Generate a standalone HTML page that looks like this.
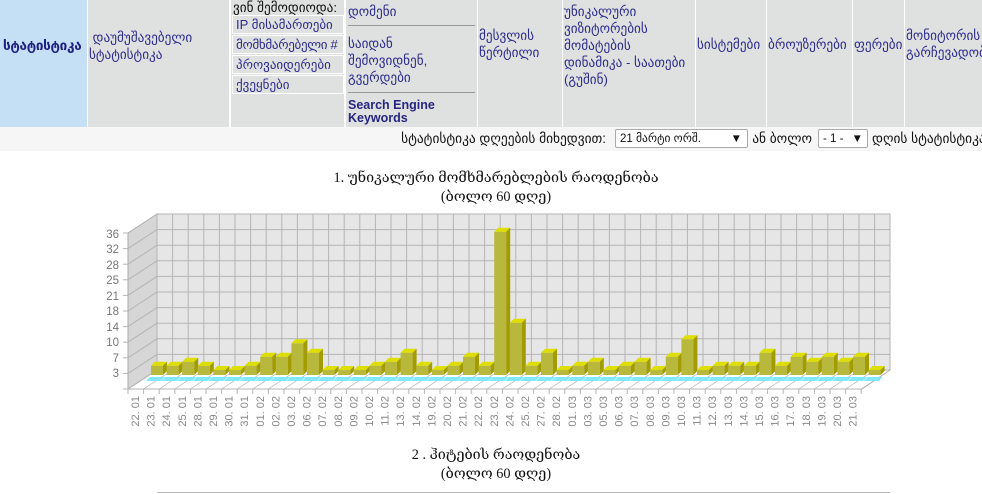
<!DOCTYPE html>
<html><head><meta charset="utf-8">
<style>
body{margin:0;width:982px;height:494px;overflow:hidden;background:#fff;font-family:"Liberation Sans","DejaVu Sans",sans-serif;position:relative}
.c{position:absolute;top:0;height:127px;background:#dfe0e0;color:#2c2c8c;font-size:13.2px;line-height:17px}
.sb{position:absolute;left:232px;width:107px;height:17px;background:#dfe0e0;border:1px solid #fff;color:#2c2c8c;font-size:13px;line-height:17px;padding-left:3px;box-sizing:content-box;white-space:nowrap;overflow:hidden}
.row2{position:absolute;top:127px;left:0;width:982px;height:24px;background:#f6f6f6;font-size:13.4px;color:#111}
.sel{position:absolute;top:2px;height:19px;border:1px solid #aaa;background:#fff;font-size:11.5px;line-height:18px;padding-left:4px;box-sizing:border-box;border-radius:2px}
.t{position:absolute;width:982px;left:5px;text-align:center;font-family:"Liberation Serif","DejaVu Serif",serif;font-size:14.3px;color:#111}
</style></head><body>
<div class="c" style="left:0;width:87px;background:#c5e0f5;font-weight:bold;line-height:92px;padding-left:3px;box-sizing:border-box;color:#1f1f80;font-size:13.5px;letter-spacing:-0.3px;white-space:nowrap;overflow:hidden">სტატისტიკა</div>
<div class="c" style="left:88px;width:141px;padding:29px 0 0 1px;box-sizing:border-box">&nbsp;დაუმუშავებელი<br>სტატისტიკა</div>
<div class="c" style="left:230px;width:115px;background:#fff"></div>
<div class="c" style="left:231px;width:113px;color:#111;padding:0 2px;box-sizing:border-box;line-height:16px;white-space:nowrap;overflow:hidden">ვინ შემოდიოდა:</div>
<div class="c" style="left:231px;width:113px;top:96px;height:31px"></div>
<div class="sb" style="top:15px">IP მისამართები</div>
<div class="sb" style="top:35px;letter-spacing:-0.3px">მომხმარებელი #</div>
<div class="sb" style="top:55px">პროვაიდერები</div>
<div class="sb" style="top:75px">ქვეყნები</div>
<div class="c" style="left:346px;width:131px;padding-left:2px;box-sizing:border-box">
<div style="margin-top:3px">დომენი</div>
<div style="border-top:1px solid #999;margin:5px 2px 0 0"></div>
<div style="margin-top:9px">საიდან<br>შემოვიდნენ,<br>გვერდები</div>
<div style="border-top:1px solid #999;margin:6px 2px 0 0"></div>
<div style="margin-top:6px;font-weight:bold;line-height:13px;font-size:12.5px;color:#262680">Search Engine<br>Keywords</div></div>
<div class="c" style="left:478px;width:84px;padding:27px 0 0 1px;box-sizing:border-box">მესვლის<br>წერტილი</div>
<div class="c" style="left:563px;width:132px;padding:3px 0 0 1px;box-sizing:border-box;white-space:nowrap">უნიკალური<br>ვიზიტორების<br>მომატების<br>დინამიკა - საათები<br>(გუშინ)</div>
<div class="c" style="left:696px;width:70px;padding:36px 0 0 1px;box-sizing:border-box;white-space:nowrap;overflow:hidden">სისტემები</div>
<div class="c" style="left:767px;width:85px;padding:36px 0 0 1px;box-sizing:border-box;white-space:nowrap;overflow:hidden">ბროუზერები</div>
<div class="c" style="left:853px;width:51px;padding:36px 0 0 1px;box-sizing:border-box;white-space:nowrap;overflow:hidden">ფერები</div>
<div class="c" style="left:905px;width:77px;padding:27px 0 0 1px;box-sizing:border-box;white-space:nowrap;overflow:hidden">მონიტორის<br>გარჩევადობ</div>
<div class="row2">
<span style="position:absolute;right:376px;top:4px;white-space:nowrap">სტატისტიკა დღეების მიხედვით:</span>
<div class="sel" style="left:615px;width:133px">21 მარტი ორშ.<span style="position:absolute;right:5px">▼</span></div>
<span style="position:absolute;right:170px;top:4px;white-space:nowrap">ან ბოლო</span>
<div class="sel" style="left:818px;width:50px">- 1 -<span style="position:absolute;right:4px">▼</span></div>
<span style="position:absolute;left:872px;top:4px;white-space:nowrap">დღის სტატისტიკა</span>
</div>
<div class="t" style="top:170px">1. უნიკალური მომხმარებლების რაოდენობა</div>
<div class="t" style="top:189px">(ბოლო 60 დღე)</div>
<div class="t" style="top:447px">2 . ჰიტების რაოდენობა</div>
<div class="t" style="top:466px">(ბოლო 60 დღე)</div>
<svg style="position:absolute;left:0;top:0" width="982" height="494">
<line x1="157" y1="492.5" x2="890" y2="492.5" stroke="#bbb"/>
<polygon points="128,233 157,214 157,370 128,389" fill="#d6d6d6" stroke="#aaa"/>
<rect x="157" y="214" width="733" height="156" fill="#e6e6e6" stroke="#b4b4b4"/>
<polygon points="128,389 157,370 890,370 862,389" fill="#fff" stroke="#b4b4b4"/>
<g id="grid" stroke="#b4b4b4" stroke-width="1"></g>
<g id="bars"></g>
<g font-size="11.5" fill="#777" text-anchor="end">
<text x="119" y="238">36</text><text x="119" y="253">32</text><text x="119" y="269">28</text><text x="119" y="284">25</text><text x="119" y="300">21</text><text x="119" y="315">18</text><text x="119" y="331">14</text><text x="119" y="346">10</text><text x="119" y="362">7</text><text x="119" y="377">3</text>
</g>
<g id="xl" font-size="11" fill="#888" text-anchor="end">
<text transform="translate(139,396) rotate(-90)">22. 01</text>
<text transform="translate(154.6,396) rotate(-90)">23. 01</text>
<text transform="translate(170.2,396) rotate(-90)">24. 01</text>
<text transform="translate(185.8,396) rotate(-90)">25. 01</text>
<text transform="translate(201.4,396) rotate(-90)">28. 01</text>
<text transform="translate(217,396) rotate(-90)">29. 01</text>
<text transform="translate(232.6,396) rotate(-90)">30. 01</text>
<text transform="translate(248.2,396) rotate(-90)">31. 01</text>
<text transform="translate(263.8,396) rotate(-90)">01. 02</text>
<text transform="translate(279.4,396) rotate(-90)">02. 02</text>
<text transform="translate(295,396) rotate(-90)">03. 02</text>
<text transform="translate(310.6,396) rotate(-90)">06. 02</text>
<text transform="translate(326.2,396) rotate(-90)">07. 02</text>
<text transform="translate(341.8,396) rotate(-90)">08. 02</text>
<text transform="translate(357.4,396) rotate(-90)">09. 02</text>
<text transform="translate(373,396) rotate(-90)">10. 02</text>
<text transform="translate(388.6,396) rotate(-90)">11. 02</text>
<text transform="translate(404.2,396) rotate(-90)">13. 02</text>
<text transform="translate(419.8,396) rotate(-90)">14. 02</text>
<text transform="translate(435.4,396) rotate(-90)">19. 02</text>
<text transform="translate(451,396) rotate(-90)">20. 02</text>
<text transform="translate(466.6,396) rotate(-90)">21. 02</text>
<text transform="translate(482.2,396) rotate(-90)">22. 02</text>
<text transform="translate(497.8,396) rotate(-90)">23. 02</text>
<text transform="translate(513.4,396) rotate(-90)">24. 02</text>
<text transform="translate(529,396) rotate(-90)">25. 02</text>
<text transform="translate(544.6,396) rotate(-90)">27. 02</text>
<text transform="translate(560.2,396) rotate(-90)">28. 02</text>
<text transform="translate(575.8,396) rotate(-90)">01. 03</text>
<text transform="translate(591.4,396) rotate(-90)">03. 03</text>
<text transform="translate(607,396) rotate(-90)">05. 03</text>
<text transform="translate(622.6,396) rotate(-90)">06. 03</text>
<text transform="translate(638.2,396) rotate(-90)">07. 03</text>
<text transform="translate(653.8,396) rotate(-90)">08. 03</text>
<text transform="translate(669.4,396) rotate(-90)">09. 03</text>
<text transform="translate(685,396) rotate(-90)">10. 03</text>
<text transform="translate(700.6,396) rotate(-90)">11. 03</text>
<text transform="translate(716.2,396) rotate(-90)">12. 03</text>
<text transform="translate(731.8,396) rotate(-90)">13. 03</text>
<text transform="translate(747.4,396) rotate(-90)">14. 03</text>
<text transform="translate(763,396) rotate(-90)">15. 03</text>
<text transform="translate(778.6,396) rotate(-90)">16. 03</text>
<text transform="translate(794.2,396) rotate(-90)">17. 03</text>
<text transform="translate(809.8,396) rotate(-90)">18. 03</text>
<text transform="translate(825.4,396) rotate(-90)">19. 03</text>
<text transform="translate(841,396) rotate(-90)">20. 03</text>
<text transform="translate(856.6,396) rotate(-90)">21. 03</text>
</g>
</svg>
<script>
var ns="http://www.w3.org/2000/svg";
function el(p,t,a){var e=document.createElementNS(ns,t);for(var k in a)e.setAttribute(k,a[k]);p.appendChild(e);return e;}
var g=document.getElementById("grid");
for(var i=1;i<10;i++){var y=214+i*15.6;el(g,"line",{x1:157,y1:y,x2:890,y2:y});el(g,"line",{x1:128,y1:y+19,x2:157,y2:y});el(g,"line",{x1:123,y1:y+19,x2:128,y2:y+19});}
el(g,"line",{x1:123,y1:233,x2:128,y2:233});el(g,"line",{x1:123,y1:389,x2:128,y2:389});
for(var i=1;i<47;i++){var x=157+i*15.6;el(g,"line",{x1:x,y1:214,x2:x,y2:370});}
for(var i=0;i<48;i++){var x=128+i*15.6;el(g,"line",{x1:x,y1:389,x2:x+29,y2:370,"stroke-width":0.7});el(g,"line",{x1:x,y1:389,x2:x,y2:394});}
var tops=[365.7,365.7,361.7,365.7,370,370,365.7,356.7,356.7,343.3,352.7,370,370,370,365.7,361.7,352.7,365.7,370,365.7,356.7,365.7,231.7,322.7,365.7,352.7,370,365.7,361.7,370,365.7,361.7,370,356.7,339.3,370,365.7,365.7,365.7,352.7,365.7,356.7,361.7,356.7,361.7,356.7,370];
var b=document.getElementById("bars");
for(var i=0;i<47;i++){var x=151+15.6*i;
el(b,"polygon",{points:(x-5)+",381 "+(x+10)+",381 "+(x+14)+",377 "+(x-1)+",377",fill:"#80e8f8"});}
for(var i=0;i<47;i++){var x=151+15.6*i,t=tops[i];
el(b,"rect",{x:x,y:t,width:12,height:375-t,fill:"#b8b83c"});
el(b,"polygon",{points:x+","+t+" "+(x+4)+","+(t-4)+" "+(x+16)+","+(t-4)+" "+(x+12)+","+t,fill:"#dede00"});
el(b,"polygon",{points:(x+12)+","+t+" "+(x+16)+","+(t-4)+" "+(x+16)+",371 "+(x+12)+",375",fill:"#a39c00"});}
</script>
</body></html>
